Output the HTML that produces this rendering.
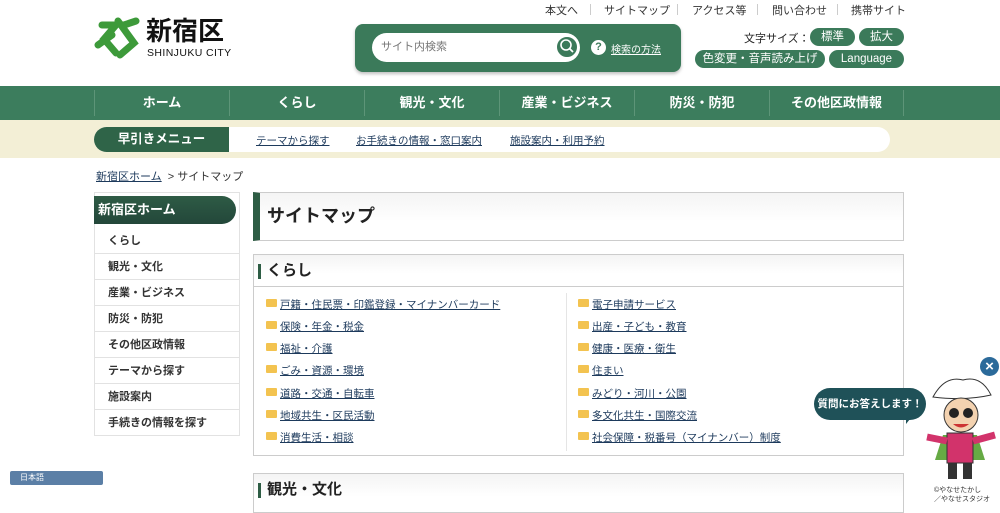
<!DOCTYPE html>
<html><head><meta charset="utf-8"><style>
*{margin:0;padding:0;box-sizing:border-box}
body{width:1000px;height:507px;overflow:hidden;background:#fff;font-family:"Liberation Sans","Noto Sans CJK JP",sans-serif;color:#222;position:relative}
.a{position:absolute}
.top a{position:absolute;top:2px;font-size:11px;color:#333;text-decoration:none}
.sep{position:absolute;top:4px;width:1px;height:11px;background:#ccc}
.pill{position:absolute;background:#3b7a5a;color:#fff;font-size:11.5px;border-radius:10px;text-align:center;line-height:18px;height:18px}
.nav{top:86px;left:0;width:1000px;height:34px;background:#3c7d5d}
.nav div{position:absolute;top:4px;height:26px;width:135px;border-left:1px solid #5d9578;color:#fff;font-weight:bold;font-size:13px;text-align:center;line-height:26px}
.side div{position:absolute;left:94px;width:146px;height:26px;border-bottom:1px solid #e2e2e2;border-left:1px solid #e2e2e2;border-right:1px solid #e2e2e2;font-size:11px;font-weight:bold;line-height:26px;padding-left:13px;color:#333}
.li{position:absolute;font-size:10.5px;color:#1d3a5c;text-decoration:underline}
.li:before{content:"";display:inline-block;width:11px;height:8px;background:#f3c350;border-radius:1px;margin-right:3px;vertical-align:1px}
.hdr{position:absolute;left:253px;width:651px;border:1px solid #ccc;background:linear-gradient(#f4f4f4,#fff 60%);font-weight:bold}
</style></head><body>
<div class="top">
<a style="left:545px">本文へ</a><span class="sep" style="left:590px"></span>
<a style="left:604px">サイトマップ</a><span class="sep" style="left:677px"></span>
<a style="left:692px">アクセス等</a><span class="sep" style="left:757px"></span>
<a style="left:772px">問い合わせ</a><span class="sep" style="left:837px"></span>
<a style="left:851px">携帯サイト</a>
</div>
<svg class="a" style="left:94px;top:15px" width="46" height="46" viewBox="0 0 46 46"><g fill="none" stroke="#3d9a3a" stroke-width="7" stroke-linecap="round"><path d="M8 10 L22 10 L10 24 L22 38"/><path d="M24 6 L40 28 L26 40"/><path d="M4 30 L18 20"/><path d="M30 10 L42 6"/></g></svg>
<div class="a" style="left:146px;top:15px;font-size:26px;font-weight:bold;letter-spacing:0;color:#111;line-height:32px">新宿区</div>
<div class="a" style="left:147px;top:47px;font-size:10.5px;letter-spacing:0.4px;color:#111">SHINJUKU CITY</div>
<div class="a" style="left:355px;top:24px;width:326px;height:48px;background:#3b7a5a;border-radius:8px;box-shadow:0 2px 3px rgba(0,0,0,.25)"></div>
<div class="a" style="left:372px;top:33px;width:208px;height:29px;background:#fff;border-radius:15px;font-size:11px;color:#777;line-height:29px;padding-left:9px">サイト内検索</div>
<div class="a" style="left:555px;top:35px;width:24px;height:24px;border-radius:12px;background:#3b7a5a;border:2px solid #fff"><svg width="20" height="20" viewBox="0 0 20 20"><circle cx="9" cy="8" r="5" fill="none" stroke="#fff" stroke-width="1.6"/><path d="M12.5 11.5L16 15" stroke="#fff" stroke-width="1.8"/></svg></div>
<div class="a" style="left:591px;top:40px;width:15px;height:15px;border-radius:8px;background:#fff;color:#3b7a5a;font-size:11px;font-weight:bold;text-align:center;line-height:15px">?</div>
<div class="a" style="left:611px;top:41px;font-size:10px;color:#fff;text-decoration:underline">検索の方法</div>
<div class="a" style="left:744px;top:30px;font-size:11px;color:#222">文字サイズ：</div>
<div class="pill" style="left:810px;top:28px;width:45px">標準</div>
<div class="pill" style="left:859px;top:28px;width:45px">拡大</div>
<div class="pill" style="left:695px;top:50px;width:130px">色変更・音声読み上げ</div>
<div class="pill" style="left:829px;top:50px;width:75px">Language</div>
<div class="a nav">
<div style="left:94px">ホーム</div><div style="left:229px">くらし</div><div style="left:364px">観光・文化</div><div style="left:499px">産業・ビジネス</div><div style="left:634px">防災・防犯</div><div style="left:769px;border-right:1px solid #5d9578">その他区政情報</div>
</div>
<div class="a" style="left:0;top:120px;width:1000px;height:38px;background:#f3efd6"></div>
<div class="a" style="left:94px;top:127px;width:796px;height:25px;background:#fff;border-radius:13px"></div>
<div class="a" style="left:94px;top:127px;width:135px;height:25px;background:#2f6448;border-radius:13px 0 0 13px;color:#fff;font-weight:bold;font-size:12.5px;text-align:center;line-height:25px">早引きメニュー</div>
<div class="a" style="left:256px;top:133px;font-size:10.5px;color:#1d3a5c;text-decoration:underline">テーマから探す</div>
<div class="a" style="left:356px;top:133px;font-size:10.5px;color:#1d3a5c;text-decoration:underline">お手続きの情報・窓口案内</div>
<div class="a" style="left:510px;top:133px;font-size:10.5px;color:#1d3a5c;text-decoration:underline">施設案内・利用予約</div>
<div class="a" style="left:96px;top:168px;font-size:11px;color:#333"><span style="text-decoration:underline;color:#1d3a5c">新宿区ホーム</span> &nbsp;&gt; サイトマップ</div>
<div class="a" style="left:94px;top:192px;width:146px;height:36px;border:1px solid #e2e2e2;border-bottom:none"></div>
<div class="a" style="left:94px;top:196px;width:142px;height:28px;background:linear-gradient(#2e5b45,#23473a);border-radius:0 14px 14px 0;color:#fff;font-weight:bold;font-size:13px;line-height:28px;padding-left:4px">新宿区ホーム</div>
<div class="side">
<div style="top:228px">くらし</div><div style="top:254px">観光・文化</div><div style="top:280px">産業・ビジネス</div><div style="top:306px">防災・防犯</div><div style="top:332px">その他区政情報</div><div style="top:358px">テーマから探す</div><div style="top:384px">施設案内</div><div style="top:410px">手続きの情報を探す</div>
</div>
<div class="hdr" style="top:192px;height:49px;font-size:18px;line-height:47px;padding-left:7px;border-left:7px solid #2e5d45">サイトマップ</div>
<div class="hdr" style="top:254px;height:33px;font-size:15px;line-height:31px;padding-left:13px"><span class="a" style="left:4px;top:9px;width:3px;height:15px;background:#2e5d45"></span>くらし</div>
<div class="a" style="left:253px;top:286px;width:651px;height:170px;border:1px solid #ccc;border-top:none"></div>
<div class="a" style="left:566px;top:293px;width:1px;height:158px;background:#e5e5e5"></div>
<div class="li" style="left:266px;top:297px">戸籍・住民票・印鑑登録・マイナンバーカード</div>
<div class="li" style="left:266px;top:319px">保険・年金・税金</div>
<div class="li" style="left:266px;top:341px">福祉・介護</div>
<div class="li" style="left:266px;top:363px">ごみ・資源・環境</div>
<div class="li" style="left:266px;top:386px">道路・交通・自転車</div>
<div class="li" style="left:266px;top:408px">地域共生・区民活動</div>
<div class="li" style="left:266px;top:430px">消費生活・相談</div>
<div class="li" style="left:578px;top:297px">電子申請サービス</div>
<div class="li" style="left:578px;top:319px">出産・子ども・教育</div>
<div class="li" style="left:578px;top:341px">健康・医療・衛生</div>
<div class="li" style="left:578px;top:363px">住まい</div>
<div class="li" style="left:578px;top:386px">みどり・河川・公園</div>
<div class="li" style="left:578px;top:408px">多文化共生・国際交流</div>
<div class="li" style="left:578px;top:430px">社会保障・税番号（マイナンバー）制度</div>
<div class="hdr" style="top:473px;height:40px;font-size:15px;line-height:31px;padding-left:13px"><span class="a" style="left:4px;top:9px;width:3px;height:15px;background:#2e5d45"></span>観光・文化</div>
<div class="a" style="left:10px;top:471px;width:93px;height:14px;background:#5b7fa6;border-radius:2px;color:#fff;font-size:8px;line-height:14px;padding-left:10px">日本語</div>
<div class="a" style="left:814px;top:388px;width:112px;height:32px;background:#1f5158;border-radius:16px;color:#fff;font-size:10.5px;font-weight:bold;line-height:32px;text-align:center">質問にお答えします！</div>
<div class="a" style="left:906px;top:414px;width:0;height:0;border-left:8px solid #1f5158;border-bottom:10px solid transparent"></div>
<div class="a" style="left:980px;top:357px;width:19px;height:19px;border-radius:10px;background:#2b6a9a;color:#fff;font-size:15px;font-weight:bold;text-align:center;line-height:19px">×</div>
<svg class="a" style="left:925px;top:375px" width="75" height="110" viewBox="0 0 75 110"><path d="M8 22 Q20 0 38 5 Q56 0 66 20 Q40 26 8 22Z" fill="#fff" stroke="#333"/><circle cx="36" cy="40" r="17" fill="#f3d2b0" stroke="#333"/><circle cx="29" cy="38" r="5" fill="#222"/><circle cx="43" cy="38" r="5" fill="#222"/><path d="M28 49 Q36 56 44 49Z" fill="#c33"/><path d="M18 60 L52 60 L60 85 L10 85Z" fill="#6a4" /><rect x="22" y="58" width="26" height="30" fill="#d2336b" stroke="#333"/><path d="M2 62 L22 66 M48 66 L70 60" stroke="#d2336b" stroke-width="7"/><rect x="23" y="88" width="9" height="16" fill="#333"/><rect x="38" y="88" width="9" height="16" fill="#333"/></svg>
<div class="a" style="left:934px;top:486px;font-size:7px;line-height:9px;color:#333">©やなせたかし<br>／やなせスタジオ</div>
</body></html>
